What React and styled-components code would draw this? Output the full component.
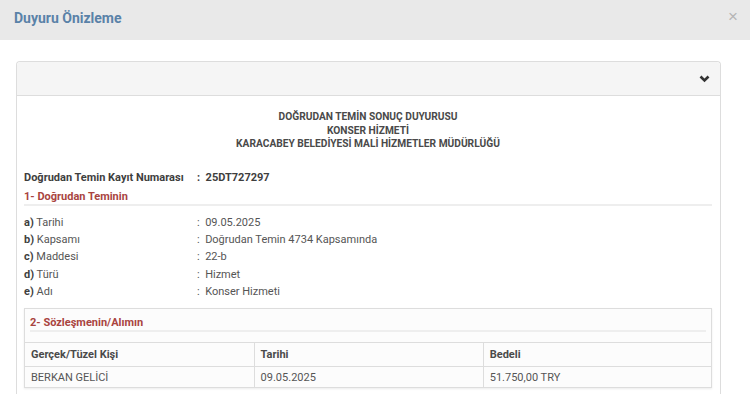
import { styled, createGlobalStyle } from "styled-components"

const GlobalStyle = createGlobalStyle`
    body{
        margin: 0;
        background: #ffffff;
        font-family: Roboto, "Liberation Sans", sans-serif;
        color: #555555;
    }
`

const rows = [
    { key: "a)", label: "Tarihi", value: "09.05.2025" },
    { key: "b)", label: "Kapsamı", value: "Doğrudan Temin 4734 Kapsamında" },
    { key: "c)", label: "Maddesi", value: "22-b" },
    { key: "d)", label: "Türü", value: "Hizmet" },
    { key: "e)", label: "Adı", value: "Konser Hizmeti" },
]

export default function App() {
    return(
        <>
            <GlobalStyle />
            <ModalHeader>
                <h4>Duyuru Önizleme</h4>
                <span className="close">×</span>
            </ModalHeader>
            <ModalBody>
                <Panel>
                    <PanelHeading>
                        <svg width="11" height="8" viewBox="0 0 11 8">
                            <path d="M1.5 1.5 L5.5 5.5 L9.5 1.5" fill="none" stroke="#333" strokeWidth="2.6" />
                        </svg>
                    </PanelHeading>
                    <PanelBody>
                        <TitleBlock>
                            <div>DOĞRUDAN TEMİN SONUÇ DUYURUSU</div>
                            <div>KONSER HİZMETİ</div>
                            <div>KARACABEY BELEDİYESİ MALİ HİZMETLER MÜDÜRLÜĞÜ</div>
                        </TitleBlock>
                        <InfoRow $strong>
                            <span className="label">Doğrudan Temin Kayıt Numarası</span>
                            <span className="value">:&nbsp; 25DT727297</span>
                        </InfoRow>
                        <SectionTitle>1- Doğrudan Teminin</SectionTitle>
                        <RowList>
                            {rows.map((r) => (
                                <InfoRow key={r.key}>
                                    <span className="label"><b>{r.key}</b> {r.label}</span>
                                    <span className="value">:&nbsp; {r.value}</span>
                                </InfoRow>
                            ))}
                        </RowList>
                        <ContractBox>
                            <SectionTitle $inner>2- Sözleşmenin/Alımın</SectionTitle>
                            <Table>
                                <thead>
                                    <tr>
                                        <th>Gerçek/Tüzel Kişi</th>
                                        <th>Tarihi</th>
                                        <th>Bedeli</th>
                                    </tr>
                                </thead>
                                <tbody>
                                    <tr>
                                        <td>BERKAN GELİCİ</td>
                                        <td>09.05.2025</td>
                                        <td>51.750,00 TRY</td>
                                    </tr>
                                </tbody>
                            </Table>
                        </ContractBox>
                    </PanelBody>
                </Panel>
            </ModalBody>
        </>
    )
}

const ModalHeader = styled.div`
    height: 40px;
    background-color: #e9e9e9;
    display: flex;
    align-items: center;
    justify-content: space-between;
    padding: 0 12px 0 14px;
    box-sizing: border-box;
    h4{
        margin: 0 0 4px 0;
        font-family: Roboto, "Liberation Sans", sans-serif;
        font-size: 14px;
        font-weight: bold;
        color: #5a82a8;
    }
    .close{
        font-family: "Liberation Sans", Arial, sans-serif;
        font-size: 17px;
        color: #b5b5b5;
        margin-bottom: 6px;
    }
`

const ModalBody = styled.div`
    padding: 21px 29px 0 16px;
`

const Panel = styled.div`
    border: 1px solid #dddddd;
    border-bottom: none;
    border-radius: 4px 4px 0 0;
    background: #ffffff;
`

const PanelHeading = styled.div`
    height: 33px;
    background-color: #f5f5f5;
    border-bottom: 1px solid #dddddd;
    border-radius: 4px 4px 0 0;
    display: flex;
    align-items: center;
    justify-content: flex-end;
    padding-right: 10px;
    svg{
        margin-top: 1px;
    }
`

const PanelBody = styled.div`
    padding: 14px 8px 6px 7px;
`

const TitleBlock = styled.div`
    text-align: center;
    font-size: 10.2px;
    font-weight: bold;
    line-height: 13.5px;
    color: #4a4a4a;
    margin-bottom: 18px;
`

const InfoRow = styled.div`
    display: flex;
    font-size: 11px;
    line-height: 17.3px;
    color: ${(p) => (p.$strong ? "#3e3e3e" : "#555555")};
    font-weight: ${(p) => (p.$strong ? "bold" : "normal")};
    .label{
        width: 173px;
        b{
            color: #3e3e3e;
        }
    }
`

const SectionTitle = styled.div`
    font-size: 11px;
    font-weight: bold;
    color: #a9443f;
    line-height: 15px;
    padding: ${(p) => (p.$inner ? "6px 0 0 0" : "3px 0 0 0")};
    margin: ${(p) => (p.$inner ? "0 5px" : "0")};
    border-bottom: 2px solid #eeeeee;
`

const RowList = styled.div`
    padding-top: 8px;
    margin-bottom: 8px;
`

const ContractBox = styled.div`
    border: 1px solid #dddddd;
    background: #fcfcfc;
    box-shadow: 0 1px 2px rgba(0, 0, 0, 0.08);
`

const Table = styled.table`
    width: 100%;
    border-collapse: collapse;
    margin-top: 10px;
    font-size: 11px;
    color: #555555;
    th, td{
        width: 33.4%;
        text-align: left;
        padding: 0 6px;
        border-top: 1px solid #dddddd;
        border-left: 1px solid #dddddd;
    }
    th:first-child, td:first-child{
        border-left: none;
    }
    th{
        height: 23px;
        font-weight: bold;
        color: #4a4a4a;
    }
    td{
        height: 20px;
    }
`
